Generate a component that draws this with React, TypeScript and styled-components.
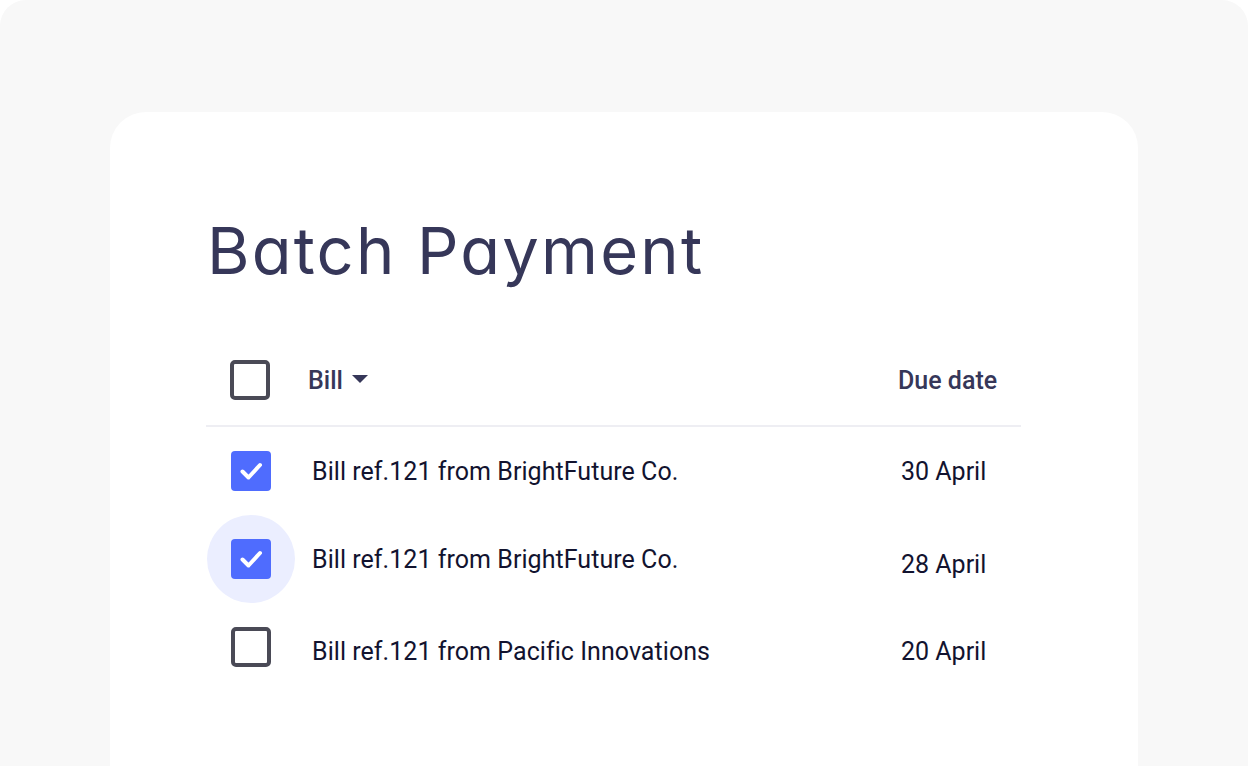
import styled, { createGlobalStyle } from 'styled-components'

const GlobalStyle = createGlobalStyle`
  html, body {
    margin: 0;
    padding: 0;
    background: #ffffff;
  }
  body {
    font-family: Roboto, "Noto Sans", sans-serif;
    -webkit-font-smoothing: antialiased;
  }
`

type Bill = { id: number; title: string; due: string; checked: boolean; focused?: boolean; nameShift?: number; dateShift?: number }

const bills: Bill[] = [
  { id: 1, title: 'Bill ref.121 from BrightFuture Co.', due: '30 April', checked: true },
  { id: 2, title: 'Bill ref.121 from BrightFuture Co.', due: '28 April', checked: true, focused: true, dateShift: 5 },
  { id: 3, title: 'Bill ref.121 from Pacific Innovations', due: '20 April', checked: false, nameShift: 4, dateShift: 4 },
]

export default function App() {
  return (
    <>
      <GlobalStyle />
      <Frame>
        <Card>
          <Title>Batch Payment</Title>
          <Table>
            <HeaderRow>
              <BoxCell>
                <Checkbox checked={false} />
              </BoxCell>
              <HeaderLabel>
                Bill
                <Caret />
              </HeaderLabel>
              <HeaderDate>Due date</HeaderDate>
            </HeaderRow>
            {bills.map(bill => (
              <Row key={bill.id}>
                <BoxCell $focused={bill.focused} $inset={1}>
                  <Checkbox checked={bill.checked} />
                </BoxCell>
                <BillName $shift={bill.nameShift ?? 0}>{bill.title}</BillName>
                <DueDate $shift={bill.dateShift ?? 0}>{bill.due}</DueDate>
              </Row>
            ))}
          </Table>
        </Card>
      </Frame>
    </>
  )
}

function Checkbox({ checked }: { checked: boolean }) {
  if (!checked) return <EmptyBox />
  return (
    <CheckedBox>
      <svg width="30" height="30" viewBox="0 0 30 30" fill="none">
        <path d="M6.5 15.5 L12.5 21.5 L24 9" stroke="#ffffff" strokeWidth="4" strokeLinecap="round" strokeLinejoin="round" />
      </svg>
    </CheckedBox>
  )
}

const Frame = styled.div`
  height: 766px;
  background: #f8f8f8;
  border-radius: 26px 26px 0 0;
  padding-top: 112px;
  box-sizing: border-box;
  overflow: hidden;
`

const Card = styled.div`
  margin-left: 110px;
  width: 1028px;
  height: 700px;
  background: #ffffff;
  border-radius: 36px 36px 0 0;
  padding: 100px 0 0 96px;
  box-sizing: border-box;
`

const Title = styled.h1`
  margin: 0 0 0 1px;
  font-family: Inter, sans-serif;
  font-feature-settings: "cv11" 1;
  font-weight: 400;
  font-size: 65px;
  line-height: 78px;
  letter-spacing: 2.2px;
  color: #363759;
`

const Table = styled.div`
  width: 815px;
  margin-top: 45px;
  display: flex;
  flex-direction: column;
`

const HeaderRow = styled.div`
  display: grid;
  grid-template-columns: 90px 1fr 123px;
  align-items: center;
  height: 90px;
  border-bottom: 2px solid #eeeef3;
`

const Row = styled.div`
  display: grid;
  grid-template-columns: 90px 1fr 120px;
  align-items: center;
  height: 88px;
`

const BoxCell = styled.div<{ $focused?: boolean; $inset?: number }>`
  width: 88px;
  height: 88px;
  margin-left: ${({ $inset }) => $inset ?? 0}px;
  border-radius: 50%;
  display: flex;
  align-items: center;
  justify-content: center;
  background: ${({ $focused }) => ($focused ? '#ebeeff' : 'transparent')};
`

const EmptyBox = styled.div`
  width: 40px;
  height: 40px;
  box-sizing: border-box;
  border: 4px solid #4a4a56;
  border-radius: 5px;
  background: #ffffff;
`

const CheckedBox = styled.div`
  width: 40px;
  height: 40px;
  border-radius: 4px;
  background: #4f6cfe;
  display: flex;
  align-items: center;
  justify-content: center;
`

const HeaderLabel = styled.div`
  display: flex;
  align-items: center;
  gap: 9px;
  padding-left: 12px;
  font-size: 25px;
  font-weight: 500;
  color: #363759;
`

const Caret = styled.span`
  width: 0;
  height: 0;
  border-left: 8px solid transparent;
  border-right: 8px solid transparent;
  border-top: 8px solid #363759;
  margin-top: -2px;
`

const HeaderDate = styled.div`
  font-size: 25px;
  font-weight: 500;
  color: #363759;
`

const BillName = styled.div<{ $shift: number }>`
  padding-left: 16px;
  padding-top: ${({ $shift }) => $shift * 2}px;
  font-size: 25px;
  letter-spacing: 0.05px;
  color: #12132f;
`

const DueDate = styled.div<{ $shift: number }>`
  padding-top: ${({ $shift }) => $shift * 2}px;
  font-size: 25px;
  color: #12132f;
`
